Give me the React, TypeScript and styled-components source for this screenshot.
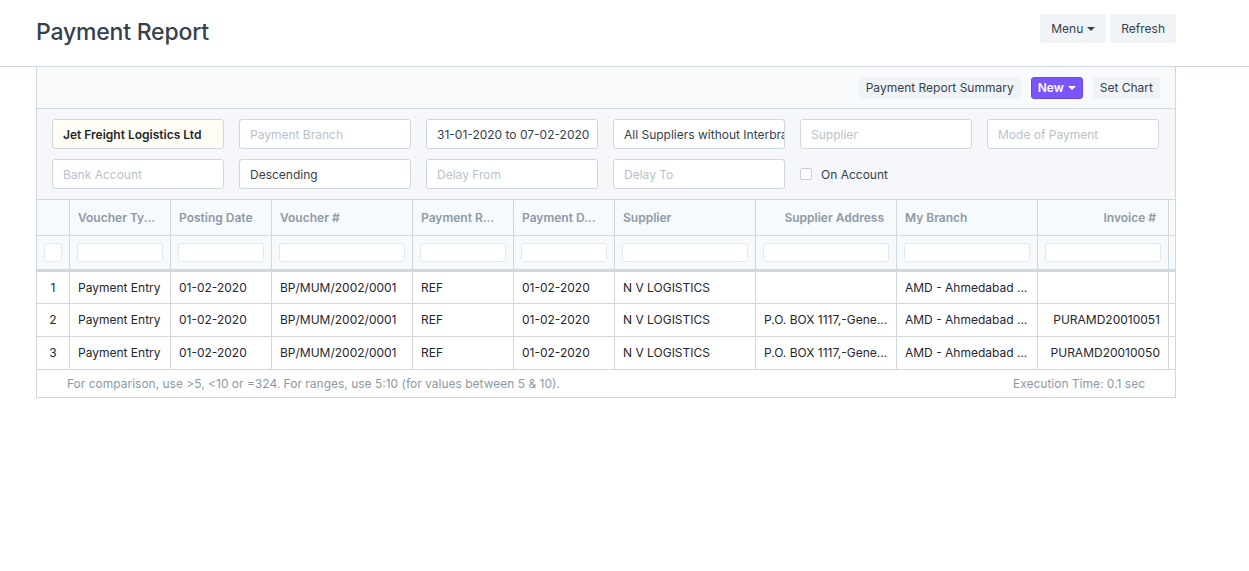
import styled, { createGlobalStyle } from "styled-components";

const GlobalStyle = createGlobalStyle`
  * { box-sizing: border-box; }
  body {
    margin: 0;
    background: #fff;
    font-family: Inter, "Noto Sans", "Liberation Sans", sans-serif;
    color: #36414c;
    -webkit-font-smoothing: antialiased;
  }
`;

interface Column {
  label: string;
  width: number;
  alignHead?: "left" | "right";
  align?: "left" | "right";
}

const columns: Column[] = [
  { label: "Voucher Ty...", width: 101 },
  { label: "Posting Date", width: 101 },
  { label: "Voucher #", width: 141 },
  { label: "Payment R...", width: 101 },
  { label: "Payment D...", width: 101 },
  { label: "Supplier", width: 141 },
  { label: "Supplier Address", width: 141, alignHead: "right" },
  { label: "My Branch", width: 141 },
  { label: "Invoice #", width: 131, alignHead: "right", align: "right" },
  // next column is scrolled out of view, only its edge shows
  { label: "", width: 120 },
];

const rows: string[][] = [
  ["Payment Entry", "01-02-2020", "BP/MUM/2002/0001", "REF", "01-02-2020", "N V LOGISTICS", "", "AMD - Ahmedabad ...", "", ""],
  ["Payment Entry", "01-02-2020", "BP/MUM/2002/0001", "REF", "01-02-2020", "N V LOGISTICS", "P.O. BOX 1117,-Gene...", "AMD - Ahmedabad ...", "PURAMD20010051", ""],
  ["Payment Entry", "01-02-2020", "BP/MUM/2002/0001", "REF", "01-02-2020", "N V LOGISTICS", "P.O. BOX 1117,-Gene...", "AMD - Ahmedabad ...", "PURAMD20010050", ""],
];

const filters: { text: string; value?: boolean; highlight?: boolean }[] = [
  { text: "Jet Freight Logistics Ltd", value: true, highlight: true },
  { text: "Payment Branch" },
  { text: "31-01-2020 to 07-02-2020", value: true },
  { text: "All Suppliers without Interbranch", value: true },
  { text: "Supplier" },
  { text: "Mode of Payment" },
  { text: "Bank Account" },
  { text: "Descending", value: true },
  { text: "Delay From" },
  { text: "Delay To" },
];

const PageHead = styled.header`
  height: 67px;
  border-bottom: 1px solid #d1d8dd;
  display: flex;
  justify-content: space-between;
  align-items: flex-start;
  padding: 14px 73px 0 36px;
`;

const Title = styled.h1`
  margin: 4px 0 0;
  font-size: 23px;
  font-weight: 500;
  color: #36414c;
  letter-spacing: -0.2px;
`;

const Actions = styled.div`
  display: flex;
  gap: 4px;
`;

const Button = styled.button<{ $small?: boolean; $primary?: boolean }>`
  display: inline-flex;
  align-items: center;
  gap: 4px;
  height: ${(p) => (p.$small ? "22px" : "29px")};
  padding: ${(p) => (p.$small ? "0 6px" : "0 10px")};
  border: 1px solid ${(p) => (p.$primary ? "#6b47f2" : "transparent")};
  border-radius: 3px;
  background: ${(p) => (p.$primary ? "#7a55fb" : "#f0f4f7")};
  color: ${(p) => (p.$primary ? "#fff" : "#36414c")};
  font-family: inherit;
  font-size: 12px;
  font-weight: ${(p) => (p.$primary ? 600 : 400)};
  cursor: pointer;
`;

const Caret = styled.span`
  width: 0;
  height: 0;
  border-left: 4px solid transparent;
  border-right: 4px solid transparent;
  border-top: 4px solid currentColor;
  margin-top: 1px;
`;

const Panel = styled.section`
  margin: 0 73px 0 36px;
  border: 1px solid #d1d8dd;
  border-top: none;
`;

const Toolbar = styled.div`
  height: 42px;
  display: flex;
  align-items: center;
  justify-content: flex-end;
  gap: 10px;
  padding: 0 15px;
  background: #f8fafc;
  border-bottom: 1px solid #d1d8dd;
`;

const FilterArea = styled.div`
  display: grid;
  grid-template-columns: repeat(6, 172px);
  column-gap: 15px;
  row-gap: 10px;
  padding: 10px 15px;
  background: #f5f7fa;
  border-bottom: 1px solid #d1d8dd;
`;

const FilterInput = styled.div<{ $value?: boolean; $highlight?: boolean }>`
  height: 30px;
  display: flex;
  align-items: center;
  padding: 0 10px;
  border: 1px solid #d1d8dd;
  border-radius: 3px;
  background: ${(p) => (p.$highlight ? "#fffdf4" : "#fff")};
  color: ${(p) => (p.$highlight ? "#1f272e" : p.$value ? "#36414c" : "#b8c2cc")};
  font-size: 12px;
  font-weight: ${(p) => (p.$highlight ? 600 : 400)};
  white-space: nowrap;
  overflow: hidden;
`;

const CheckField = styled.label`
  display: flex;
  align-items: center;
  gap: 9px;
  height: 30px;
  font-size: 12px;
  color: #36414c;
`;

const CheckBox = styled.span`
  width: 12px;
  height: 12px;
  border: 1px solid #c8d0d6;
  border-radius: 2px;
  background: #fff;
`;

const TableWrap = styled.div`
  overflow: hidden;
  width: 100%;
`;

const Table = styled.table`
  border-collapse: collapse;
  table-layout: fixed;
  width: max-content;
  font-size: 12px;
`;

const HeadCell = styled.th<{ $align?: string }>`
  height: 35px;
  padding: 0 12px 0 8px;
  background: #f7fafc;
  border-right: 1px solid #d1d8dd;
  color: #8d99a6;
  font-weight: 600;
  text-align: ${(p) => p.$align || "left"};
  white-space: nowrap;
  overflow: hidden;
`;

const FilterCell = styled.td`
  height: 35px;
  padding: 0 7px;
  background: #f7fafc;
  border-right: 1px solid #d1d8dd;
  border-top: 1px solid #d1d8dd;
  border-bottom: 3px solid #d1d8dd;
`;

const CellInput = styled.div<{ $narrow?: boolean }>`
  height: 19px;
  width: 100%;
  border: 1px solid #e4e9ed;
  border-radius: 3px;
  background: #fff;
  ${(p) => p.$narrow && "width: 18px; margin: 0 auto;"}
`;

const Cell = styled.td<{ $align?: string; $center?: boolean }>`
  height: 33px;
  padding: 0 8px;
  border-right: 1px solid #d1d8dd;
  border-bottom: 1px solid #d1d8dd;
  color: #1f272e;
  text-align: ${(p) => (p.$center ? "center" : p.$align || "left")};
  white-space: nowrap;
  overflow: hidden;
`;

const Footer = styled.div`
  height: 27px;
  display: flex;
  align-items: center;
  justify-content: space-between;
  padding: 0 30px;
  font-size: 12px;
  color: #8d99a6;
`;

export default function App() {
  return (
    <>
      <GlobalStyle />
      <PageHead>
        <Title>Payment Report</Title>
        <Actions>
          <Button>
            Menu <Caret />
          </Button>
          <Button>Refresh</Button>
        </Actions>
      </PageHead>
      <Panel>
        <Toolbar>
          <Button $small>Payment Report Summary</Button>
          <Button $small $primary>
            New <Caret />
          </Button>
          <Button $small>Set Chart</Button>
        </Toolbar>
        <FilterArea>
          {filters.map((f) => (
            <FilterInput key={f.text} $value={f.value} $highlight={f.highlight}>
              {f.text}
            </FilterInput>
          ))}
          <CheckField>
            <CheckBox />
            On Account
          </CheckField>
        </FilterArea>
        <TableWrap>
          <Table>
            <colgroup>
              <col style={{ width: 32 }} />
              {columns.map((c, i) => (
                <col key={i} style={{ width: c.width }} />
              ))}
            </colgroup>
            <thead>
              <tr>
                <HeadCell />
                {columns.map((c, i) => (
                  <HeadCell key={i} $align={c.alignHead}>
                    {c.label}
                  </HeadCell>
                ))}
              </tr>
              <tr>
                <FilterCell>
                  <CellInput $narrow />
                </FilterCell>
                {columns.map((_, i) => (
                  <FilterCell key={i}>
                    <CellInput />
                  </FilterCell>
                ))}
              </tr>
            </thead>
            <tbody>
              {rows.map((r, i) => (
                <tr key={i}>
                  <Cell $center>{i + 1}</Cell>
                  {r.map((v, j) => (
                    <Cell key={j} $align={columns[j].align}>
                      {v}
                    </Cell>
                  ))}
                </tr>
              ))}
            </tbody>
          </Table>
        </TableWrap>
        <Footer>
          <span>For comparison, use &gt;5, &lt;10 or =324. For ranges, use 5:10 (for values between 5 &amp; 10).</span>
          <span>Execution Time: 0.1 sec</span>
        </Footer>
      </Panel>
    </>
  );
}
